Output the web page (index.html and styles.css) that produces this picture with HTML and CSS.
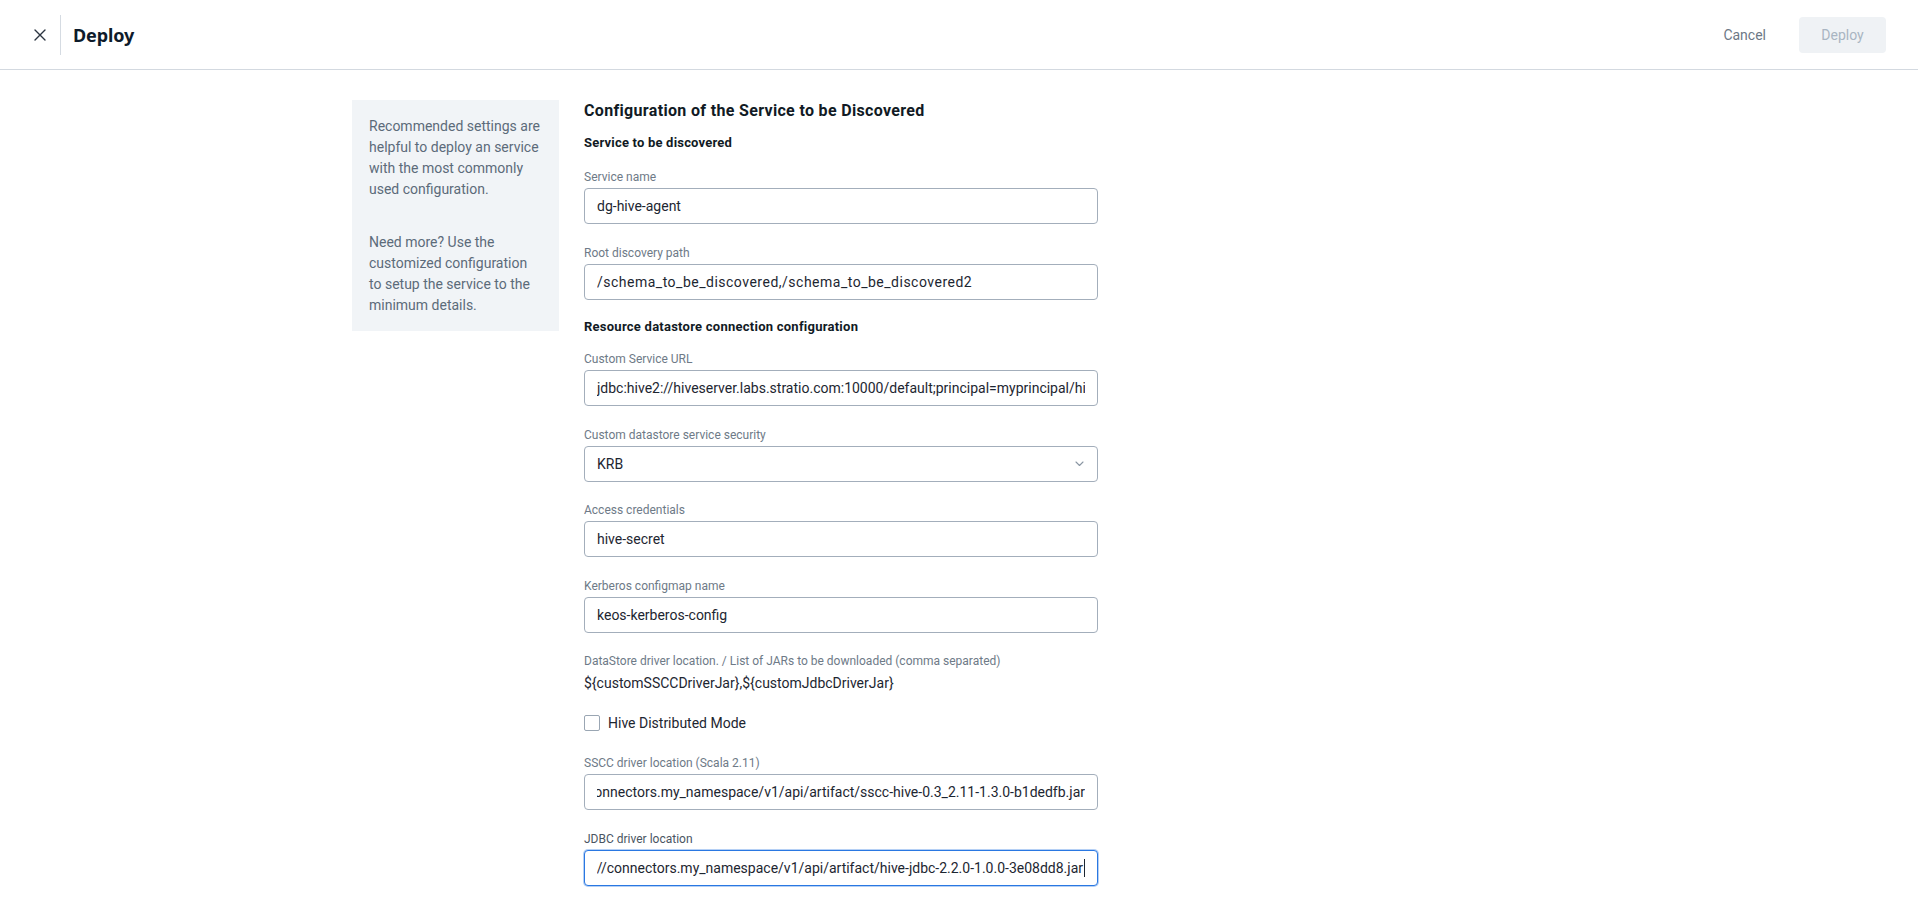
FILE: index.html
```html
<!DOCTYPE html>
<html lang="en">
<head>
<meta charset="utf-8">
<title>Deploy</title>
<link rel="stylesheet" href="styles.css">
</head>
<body>
<header class="topbar">
  <div class="topbar-left">
    <button class="close-btn" aria-label="Close">
      <svg width="12" height="12" viewBox="0 0 12 12"><path d="M1 1 L11 11 M11 1 L1 11" stroke="#2b3440" stroke-width="1.4" stroke-linecap="round" fill="none"/></svg>
    </button>
    <span class="divider"></span>
    <h1 class="page-title">Deploy</h1>
  </div>
  <div class="topbar-right">
    <button class="btn-cancel">Cancel</button>
    <button class="btn-deploy" disabled>Deploy</button>
  </div>
</header>

<main class="content">
  <aside class="side-note">
    <p>Recommended settings are helpful to deploy an service with the most commonly used configuration.</p>
    <p>Need more? Use the customized configuration to setup the service to the minimum details.</p>
  </aside>

  <section class="form">
    <h2 class="form-title">Configuration of the Service to be Discovered</h2>
    <h3 class="section-title first">Service to be discovered</h3>

    <div class="field">
      <label class="field-label">Service name</label>
      <div class="input"><span class="input-text">dg-hive-agent</span></div>
    </div>

    <div class="field">
      <label class="field-label">Root discovery path</label>
      <div class="input"><span class="input-text wide">/schema_to_be_discovered,/schema_to_be_discovered2</span></div>
    </div>

    <h3 class="section-title">Resource datastore connection configuration</h3>

    <div class="field">
      <label class="field-label">Custom Service URL</label>
      <div class="input"><span class="input-text">jdbc:hive2://hiveserver.labs.stratio.com:10000/default;principal=myprincipal/hiveserver.labs.stratio.com@REALM</span></div>
    </div>

    <div class="field">
      <label class="field-label">Custom datastore service security</label>
      <div class="input select">
        <span class="input-text">KRB</span>
        <svg class="chevron" width="9" height="6" viewBox="0 0 9 6"><path d="M1 1 L4.5 4.5 L8 1" stroke="#8a96a3" stroke-width="1.1" fill="none" stroke-linecap="round" stroke-linejoin="round"/></svg>
      </div>
    </div>

    <div class="field">
      <label class="field-label">Access credentials</label>
      <div class="input"><span class="input-text">hive-secret</span></div>
    </div>

    <div class="field">
      <label class="field-label">Kerberos configmap name</label>
      <div class="input"><span class="input-text">keos-kerberos-config</span></div>
    </div>

    <div class="field static">
      <label class="field-label">DataStore driver location. / List of JARs to be downloaded (comma separated)</label>
      <div class="static-value">${customSSCCDriverJar},${customJdbcDriverJar}</div>
    </div>

    <label class="checkbox-row">
      <span class="checkbox"></span>
      <span class="checkbox-label">Hive Distributed Mode</span>
    </label>

    <div class="field">
      <label class="field-label">SSCC driver location (Scala 2.11)</label>
      <div class="input end"><span class="input-text">http://connectors.my_namespace/v1/api/artifact/sscc-hive-0.3_2.11-1.3.0-b1dedfb.jar</span></div>
    </div>

    <div class="field">
      <label class="field-label dark">JDBC driver location</label>
      <div class="input end focused"><span class="input-text">http://connectors.my_namespace/v1/api/artifact/hive-jdbc-2.2.0-1.0.0-3e08dd8.jar<span class="caret"></span></span></div>
    </div>
  </section>
</main>
</body>
</html>
```

FILE: styles.css
```css
* { box-sizing: border-box; }

html, body {
  margin: 0;
  padding: 0;
  background: #ffffff;
  font-family: Roboto, "Liberation Sans", Arial, sans-serif;
  color: #1d2631;
}

.topbar {
  height: 70px;
  border-bottom: 1px solid #d3d9e0;
  display: flex;
  align-items: center;
  justify-content: space-between;
  padding: 0 32px 0 32px;
}

.topbar-left {
  display: flex;
  align-items: center;
  height: 100%;
}

.close-btn {
  border: 0;
  background: transparent;
  padding: 0;
  width: 14px;
  height: 14px;
  display: flex;
  align-items: center;
  justify-content: center;
  margin-left: 1px;
  cursor: pointer;
}

.divider {
  width: 1px;
  height: 40px;
  background: #d5dbe2;
  margin-left: 13px;
}

.page-title {
  margin: 0 0 0 12px;
  font-family: "Noto Sans", Roboto, sans-serif;
  font-weight: 700;
  font-size: 18px;
  color: #0e1b2b;
  letter-spacing: -0.1px;
}

.topbar-right {
  display: flex;
  align-items: center;
  gap: 33px;
}

.btn-cancel {
  border: 0;
  background: transparent;
  font-family: inherit;
  font-size: 14px;
  color: #6c7886;
  padding: 0;
  cursor: pointer;
}

.btn-deploy {
  border: 0;
  background: #eff2f5;
  color: #a9b5c2;
  font-family: inherit;
  font-size: 14px;
  height: 36px;
  width: 87px;
  border-radius: 4px;
}

.content {
  width: 1214px;
  margin: 0 auto;
  padding-top: 30px;
  display: flex;
  align-items: flex-start;
  gap: 25px;
}

.side-note {
  width: 207px;
  flex: none;
  background: #f1f4f7;
  padding: 16px 17px 15px 17px;
  font-size: 14px;
  line-height: 21px;
  color: #5c6b7a;
}

.side-note p {
  margin: 0;
}

.side-note p + p {
  margin-top: 32px;
}

.form {
  width: 514px;
  flex: none;
}

.form-title {
  margin: 0;
  font-size: 16px;
  line-height: 22px;
  font-weight: 700;
  color: #111a24;
  letter-spacing: 0.33px;
}

.section-title {
  margin: -2px 0 15px 0;
  font-size: 13px;
  line-height: 18px;
  font-weight: 700;
  color: #111a24;
  letter-spacing: 0.25px;
}

.section-title.first {
  margin: 12px 0 17px 0;
  letter-spacing: 0.2px;
}

.field {
  margin-bottom: 20.5px;
}

.field-label {
  display: block;
  font-size: 12px;
  line-height: 16px;
  color: #6e7a87;
  margin-bottom: 3px;
}

.field-label.dark {
  color: #4a5562;
}

.input {
  height: 36px;
  border: 1px solid #a3aebb;
  border-radius: 4px;
  padding: 0 12px;
  display: flex;
  align-items: center;
  font-size: 14px;
  color: #1d2631;
  background: #fff;
}

.input-text {
  flex: 1;
  min-width: 0;
  overflow: hidden;
  white-space: nowrap;
  display: flex;
  align-items: center;
}

.input-text.wide {
  letter-spacing: 0.5px;
}

.input.end .input-text {
  justify-content: flex-end;
}

.input.select {
  padding-right: 13px;
}

.chevron {
  flex: none;
}

.input.focused {
  border-color: #2a78e2;
  box-shadow: 0 0 0 1px rgba(42, 120, 226, 0.35);
}

.caret {
  display: inline-block;
  width: 1px;
  height: 18px;
  background: #1d2631;
  margin-left: 1px;
  flex: none;
}

.field.static {
  margin-bottom: 20px;
}

.static-value {
  font-size: 14px;
  line-height: 20px;
  color: #1d2631;
  margin-top: 4px;
}

.checkbox-row {
  display: flex;
  align-items: center;
  gap: 8px;
  height: 20px;
  margin-bottom: 22px;
  font-size: 14px;
  color: #1d2631;
}

.checkbox {
  width: 16px;
  height: 16px;
  border: 1px solid #9aa6b3;
  border-radius: 2px;
  background: #fff;
  flex: none;
}
```
